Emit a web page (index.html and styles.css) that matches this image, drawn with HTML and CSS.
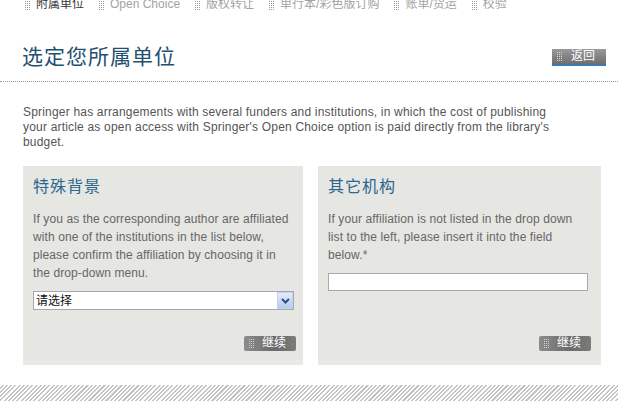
FILE: index.html
```html
<!DOCTYPE html>
<html lang="zh-CN">

<head>
    <meta charset="UTF-8">
    <title>选定您所属单位</title>
    <link rel="stylesheet" href="styles.css">
</head>

<body>
    <ul class="steps">
        <li class="step current">附属单位</li>
        <li class="step">Open Choice</li>
        <li class="step">版权转让</li>
        <li class="step">单行本/彩色版订购</li>
        <li class="step">账单/货运</li>
        <li class="step">校验</li>
    </ul>

    <div class="pageHead">
        <h1 class="pageTitle">选定您所属单位</h1>
        <button class="backBtn">
            <svg class="dots" width="5" height="9" viewBox="0 0 5 9" fill="#d8d8d8">
                <rect x="0" y="0" width="1" height="1" /><rect x="2" y="0" width="1" height="1" /><rect x="4" y="0" width="1" height="1" />
                <rect x="0" y="2" width="1" height="1" /><rect x="2" y="2" width="1" height="1" /><rect x="4" y="2" width="1" height="1" />
                <rect x="0" y="4" width="1" height="1" /><rect x="2" y="4" width="1" height="1" /><rect x="4" y="4" width="1" height="1" />
                <rect x="0" y="6" width="1" height="1" /><rect x="2" y="6" width="1" height="1" /><rect x="4" y="6" width="1" height="1" />
                <rect x="0" y="8" width="1" height="1" /><rect x="2" y="8" width="1" height="1" /><rect x="4" y="8" width="1" height="1" />
            </svg>
            返回
        </button>
    </div>

    <p class="intro">Springer has arrangements with several funders and institutions, in which the cost of publishing
        your article as open access with Springer's Open Choice option is paid directly from the library's
        budget.</p>

    <div class="panels">
        <div class="panel panelLeft">
            <h2 class="panelTitle">特殊背景</h2>
            <p class="panelText">If you as the corresponding author are affiliated with one of the institutions in the
                list below, please confirm the affiliation by choosing it in the drop-down menu.</p>
            <div class="selectBox">
                <select class="selectCss">
                    <option>请选择</option>
                </select>
                <span class="selectArrow">
                    <svg width="9" height="6" viewBox="0 0 9 6">
                        <path d="M1 1 L4.5 4.5 L8 1" fill="none" stroke="#2c4d8e" stroke-width="2" />
                    </svg>
                </span>
            </div>
            <button class="goBtn">
                <svg class="dots" width="5" height="9" viewBox="0 0 5 9" fill="#d0d0d0">
                    <rect x="0" y="0" width="1" height="1" /><rect x="2" y="0" width="1" height="1" /><rect x="4" y="0" width="1" height="1" />
                    <rect x="0" y="2" width="1" height="1" /><rect x="2" y="2" width="1" height="1" /><rect x="4" y="2" width="1" height="1" />
                    <rect x="0" y="4" width="1" height="1" /><rect x="2" y="4" width="1" height="1" /><rect x="4" y="4" width="1" height="1" />
                    <rect x="0" y="6" width="1" height="1" /><rect x="2" y="6" width="1" height="1" /><rect x="4" y="6" width="1" height="1" />
                    <rect x="0" y="8" width="1" height="1" /><rect x="2" y="8" width="1" height="1" /><rect x="4" y="8" width="1" height="1" />
                </svg>
                继续
            </button>
        </div>
        <div class="panel panelRight">
            <h2 class="panelTitle">其它机构</h2>
            <p class="panelText narrow">If your affiliation is not listed in the drop down list to the left, please insert
                it into the field below.*</p>
            <input type="text" class="textCss">
            <button class="goBtn">
                <svg class="dots" width="5" height="9" viewBox="0 0 5 9" fill="#d0d0d0">
                    <rect x="0" y="0" width="1" height="1" /><rect x="2" y="0" width="1" height="1" /><rect x="4" y="0" width="1" height="1" />
                    <rect x="0" y="2" width="1" height="1" /><rect x="2" y="2" width="1" height="1" /><rect x="4" y="2" width="1" height="1" />
                    <rect x="0" y="4" width="1" height="1" /><rect x="2" y="4" width="1" height="1" /><rect x="4" y="4" width="1" height="1" />
                    <rect x="0" y="6" width="1" height="1" /><rect x="2" y="6" width="1" height="1" /><rect x="4" y="6" width="1" height="1" />
                    <rect x="0" y="8" width="1" height="1" /><rect x="2" y="8" width="1" height="1" /><rect x="4" y="8" width="1" height="1" />
                </svg>
                继续
            </button>
        </div>
    </div>

    <div class="hatch"></div>
</body>

</html>
```

FILE: styles.css
```css
* {
    margin: 0;
    padding: 0;
    box-sizing: border-box;
}

body {
    width: 618px;
    height: 401px;
    overflow: hidden;
    background-color: white;
    font-family: "Liberation Sans", "Noto Sans CJK SC", sans-serif;
    font-size: 12px;
    color: #555;
}

.steps {
    list-style: none;
    display: flex;
    gap: 12px;
    padding-left: 22px;
    margin-top: -2px;
    height: 12px;
    line-height: 13px;
    font-size: 12px;
}

.step {
    position: relative;
    padding-left: 14px;
    color: #a3a3a3;
}

.step::before {
    content: "";
    position: absolute;
    left: 3px;
    top: 3px;
    width: 5px;
    height: 9px;
    background:
        linear-gradient(90deg, transparent 1px, white 1px) 0 0 / 2px 2px,
        linear-gradient(#999 1px, white 1px) 0 0 / 2px 2px;
}

.current {
    color: #333;
}

.pageHead {
    display: flex;
    align-items: flex-start;
    justify-content: space-between;
    padding: 32px 12px 0 22px;
    height: 72px;
    border-bottom: 1px dotted #9a9a9a;
}

.pageTitle {
    font-weight: normal;
    font-size: 21px;
    letter-spacing: 1px;
    line-height: 30px;
    color: #23506f;
}

.backBtn {
    margin-top: 7px;
    width: 54px;
    height: 17px;
    border: none;
    border-bottom: 2px solid #3b7ab5;
    background: linear-gradient(#9a9a9a, #6e6e6e);
    color: white;
    font-family: inherit;
    font-size: 12px;
    line-height: 15px;
    padding-left: 8px;
    position: relative;
}

.dots {
    position: absolute;
    left: 5px;
    top: 3px;
}

.intro {
    padding-top: 23px;
    margin-left: 23px;
    width: 540px;
    line-height: 15px;
    letter-spacing: 0.19px;
    color: #555;
}

.panels {
    display: flex;
    gap: 15px;
    padding-left: 23px;
    margin-top: 16px;
}

.panel {
    display: flex;
    flex-direction: column;
    height: 199px;
    background-color: #e6e6e2;
    border-bottom: 5px solid #e9e9e5;
    padding: 10px 7px 9px 10px;
}

.panelLeft {
    width: 280px;
}

.panelRight {
    width: 283px;
    padding-right: 10px;
}

.panelTitle {
    font-weight: normal;
    font-size: 16px;
    letter-spacing: 1px;
    line-height: 21px;
    color: #2a6690;
    margin-bottom: 13px;
}

.panelText {
    line-height: 18px;
    color: #666;
    width: 262px;
    letter-spacing: 0.1px;
}

.narrow {
    width: 250px;
}

.selectBox {
    position: relative;
    margin-top: 9px;
    width: 261px;
    height: 19px;
}

.selectCss {
    appearance: none;
    width: 100%;
    height: 100%;
    border: 1px solid #a4a9ad;
    background-color: white;
    font-family: "Liberation Sans", "Noto Sans CJK SC", sans-serif;
    font-size: 12px;
    color: #111;
    padding-left: 2px;
}

.selectArrow {
    position: absolute;
    right: 1px;
    top: 1px;
    width: 16px;
    height: 17px;
    display: flex;
    align-items: center;
    justify-content: center;
    background: linear-gradient(#e4ecfa, #b8c9ec);
    border: 1px solid #c3d1ee;
}

.textCss {
    margin-top: 9px;
    width: 260px;
    height: 18px;
    border: 1px solid #aaa;
    background-color: white;
}

.goBtn {
    margin-top: auto;
    align-self: flex-end;
    position: relative;
    width: 52px;
    height: 15px;
    border: none;
    border-radius: 2px;
    background: linear-gradient(90deg, #8c8c8c, #6a6a6a 60%, #7c7c7c);
    color: white;
    font-family: inherit;
    font-size: 12px;
    line-height: 15px;
    padding-left: 8px;
}

.hatch {
    margin-top: 20px;
    height: 20px;
    background: repeating-linear-gradient(135deg, #fff 0, #fff 1.5px, #c4c4c4 1.5px, #c4c4c4 3px);
}
```
